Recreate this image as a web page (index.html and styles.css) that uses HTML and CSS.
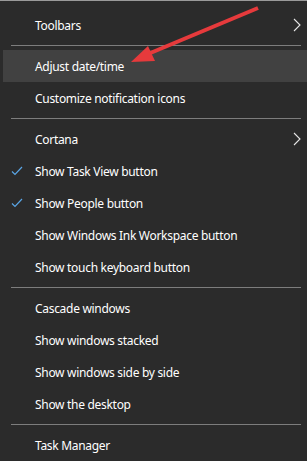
FILE: index.html
```html
<!DOCTYPE html>
<html lang="en">
<head>
    <meta charset="UTF-8">
    <meta name="viewport" content="width=device-width, initial-scale=1.0">
    <title>Taskbar menu</title>
    <link rel="stylesheet" href="styles.css">
</head>
<body>
    <div class="menu">
        <div class="item">
            <span class="slot"></span>
            <span class="label">Toolbars</span>
            <svg class="chevron" width="8" height="14" viewBox="0 0 8 14"><path d="M1 1 L7 7 L1 13" fill="none" stroke="#e6e6e6" stroke-width="1.1"/></svg>
        </div>
        <div class="sep"></div>
        <div class="item hover">
            <span class="slot"></span>
            <span class="label">Adjust date/time</span>
        </div>
        <div class="item">
            <span class="slot"></span>
            <span class="label">Customize notification icons</span>
        </div>
        <div class="sep"></div>
        <div class="item">
            <span class="slot"></span>
            <span class="label">Cortana</span>
            <svg class="chevron" width="8" height="14" viewBox="0 0 8 14"><path d="M1 1 L7 7 L1 13" fill="none" stroke="#e6e6e6" stroke-width="1.1"/></svg>
        </div>
        <div class="item">
            <span class="slot"><svg class="check" width="12" height="10" viewBox="0 0 12 10"><path d="M1 5.5 L4 8.5 L11 1" fill="none" stroke="#5aa6e6" stroke-width="1.2"/></svg></span>
            <span class="label">Show Task View button</span>
        </div>
        <div class="item">
            <span class="slot"><svg class="check" width="12" height="10" viewBox="0 0 12 10"><path d="M1 5.5 L4 8.5 L11 1" fill="none" stroke="#5aa6e6" stroke-width="1.2"/></svg></span>
            <span class="label">Show People button</span>
        </div>
        <div class="item">
            <span class="slot"></span>
            <span class="label">Show Windows Ink Workspace button</span>
        </div>
        <div class="item">
            <span class="slot"></span>
            <span class="label">Show touch keyboard button</span>
        </div>
        <div class="sep"></div>
        <div class="item">
            <span class="slot"></span>
            <span class="label">Cascade windows</span>
        </div>
        <div class="item">
            <span class="slot"></span>
            <span class="label">Show windows stacked</span>
        </div>
        <div class="item">
            <span class="slot"></span>
            <span class="label">Show windows side by side</span>
        </div>
        <div class="item">
            <span class="slot"></span>
            <span class="label">Show the desktop</span>
        </div>
        <div class="sep"></div>
        <div class="item">
            <span class="slot"></span>
            <span class="label">Task Manager</span>
        </div>
        <div class="cutoff">Lock all the taskbars</div>
    </div>

    <!-- red annotation arrow drawn over the menu -->
    <svg class="arrow" width="307" height="461" viewBox="0 0 307 461">
        <line x1="258" y1="8" x2="148" y2="54" stroke="#e63a3c" stroke-width="4"/>
        <polygon points="131,62 148,46 155,61" fill="#e63a3c"/>
    </svg>
</body>
</html>
```

FILE: styles.css
```css
html, body {
    margin: 0;
    height: 100%;
    overflow: hidden;
}
body {
    background-color: #2b2b2b;
    font-family: "Noto Sans", "Open Sans", Arial, sans-serif;
    font-size: 12px;
    letter-spacing: -0.3px;
    color: #ffffff;
    position: relative;
}
.menu {
    border-top: 1px solid #9a9a9a;
    padding-top: 8px;
}
.item {
    display: flex;
    align-items: center;
    height: 32px;
}
.item.hover {
    background-color: #414141;
    margin-left: 3px;
}
.item.hover .slot {
    width: 32px;
}
.slot {
    width: 35px;
    flex-shrink: 0;
    display: flex;
    align-items: center;
}
.check {
    margin-left: 11px;
}
.label {
    white-space: nowrap;
}
.chevron {
    margin-left: auto;
    margin-right: 6px;
}
.sep {
    height: 1px;
    background-color: #7d7d7d;
    margin: 4px 6px 4px 11px;
}
.cutoff {
    padding-left: 25px;
    margin-top: -3px;
    color: #9a9a9a;
}
.arrow {
    position: absolute;
    left: 0;
    top: 0;
}
```
